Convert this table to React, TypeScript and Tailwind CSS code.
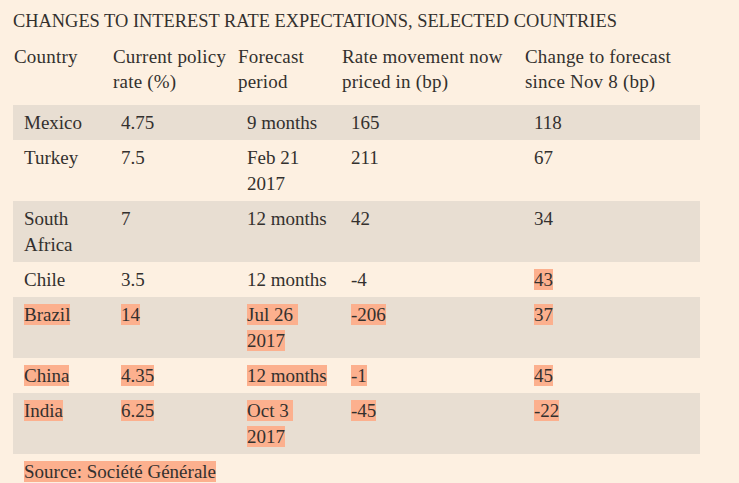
import React from "react";

type Row = {
  country: string;
  rate: string;
  period: string[];
  moved: string;
  change: string;
  hl: boolean[]; // which cells are highlighted
};

const rows: Row[] = [
  { country: "Mexico", rate: "4.75", period: ["9 months"], moved: "165", change: "118", hl: [false, false, false, false, false] },
  { country: "Turkey", rate: "7.5", period: ["Feb 21", "2017"], moved: "211", change: "67", hl: [false, false, false, false, false] },
  { country: "South Africa", rate: "7", period: ["12 months"], moved: "42", change: "34", hl: [false, false, false, false, false] },
  { country: "Chile", rate: "3.5", period: ["12 months"], moved: "-4", change: "43", hl: [false, false, false, false, true] },
  { country: "Brazil", rate: "14", period: ["Jul 26\u00a0", "2017"], moved: "-206", change: "37", hl: [true, true, true, true, true] },
  { country: "China", rate: "4.35", period: ["12 months"], moved: "-1", change: "45", hl: [true, true, true, true, true] },
  { country: "India", rate: "6.25", period: ["Oct 3\u00a0", "2017"], moved: "-45", change: "-22", hl: [true, true, true, true, true] },
];

function Mark({ on, children }: { on: boolean; children: React.ReactNode }) {
  return <span className={on ? "bg-[#fcb08e]" : ""}>{children}</span>;
}

export default function App() {
  return (
    <div
      className="min-h-screen bg-[#fdf0e1] text-[#33302e] pl-[13px] pt-[9px]"
      style={{ fontFamily: '"Liberation Serif", "Times New Roman", serif' }}
    >
      {/* Title */}
      <div className="text-[18.4px] leading-[24px] uppercase">
        Changes to interest rate expectations, selected countries
      </div>

      {/* Header */}
      <div className="mt-[11px] pl-[1px] grid grid-cols-[99px_125px_104px_183px_1fr] text-[19px] leading-[25px] tracking-[0.2px]">
        <div>Country</div>
        <div>
          Current policy
          <br />
          rate (%)
        </div>
        <div>
          Forecast
          <br />
          period
        </div>
        <div>
          Rate movement now
          <br />
          priced in (bp)
        </div>
        <div>
          Change to forecast
          <br />
          since Nov 8 (bp)
        </div>
      </div>

      {/* Table body */}
      <div className="mt-[11px] w-[687px] text-[19px] leading-[26px]">
        {rows.map((r, i) => (
          <div
            key={r.country}
            className={`grid grid-cols-[97px_126px_104px_183px_1fr] pl-[11px] pt-[5px] pb-[4px] ${
              i % 2 === 0 ? "bg-[#e8ded2]" : ""
            }`}
          >
            <div className="pr-[10px]">
              <Mark on={r.hl[0]}>{r.country}</Mark>
            </div>
            <div className="pr-[10px]">
              <Mark on={r.hl[1]}>{r.rate}</Mark>
            </div>
            <div className="pr-[4px]">
              {r.period.map((p, j) => (
                <div key={j}>
                  <Mark on={r.hl[2]}>{p}</Mark>
                </div>
              ))}
            </div>
            <div className="pr-[10px]">
              <Mark on={r.hl[3]}>{r.moved}</Mark>
            </div>
            <div>
              <Mark on={r.hl[4]}>{r.change}</Mark>
            </div>
          </div>
        ))}
      </div>

      {/* Source */}
      <div className="mt-[5px] pl-[11px] text-[19px] leading-[26px]">
        <Mark on={true}>Source: Société Générale</Mark>
      </div>
    </div>
  );
}
